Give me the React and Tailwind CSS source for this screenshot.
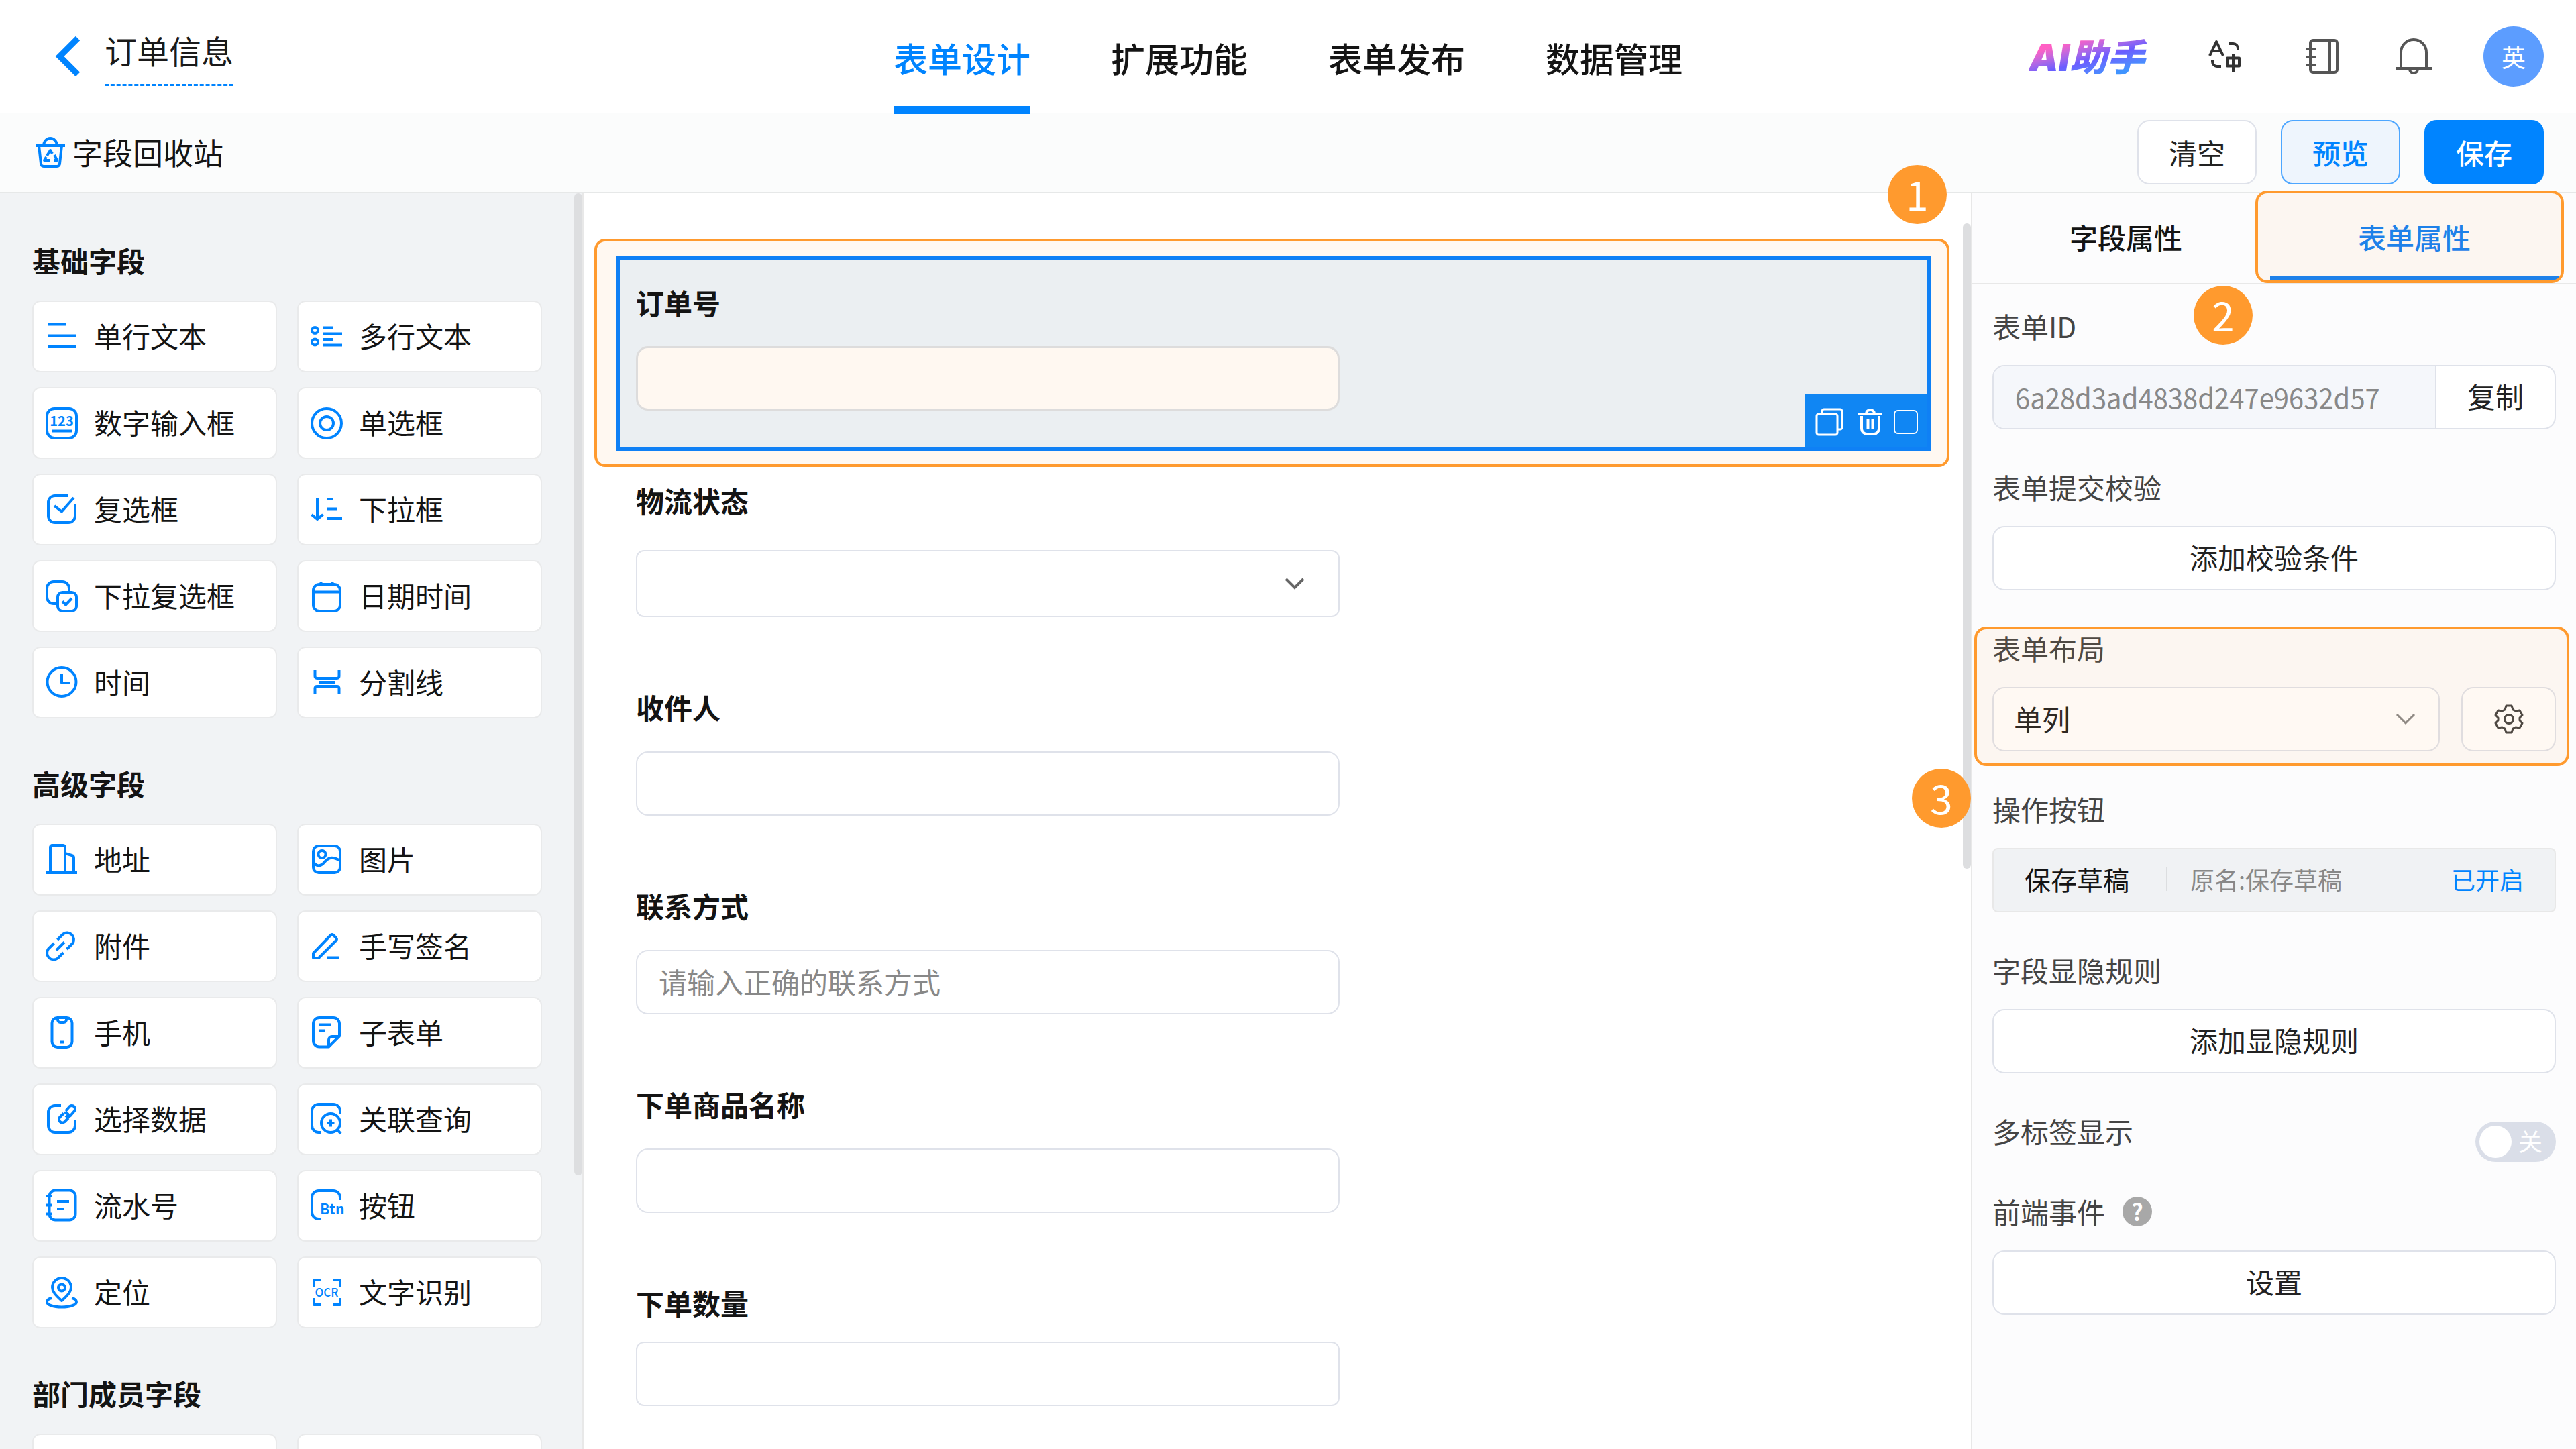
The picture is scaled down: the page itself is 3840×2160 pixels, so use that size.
import { useState } from "react";

const icons = {
  text: <path d="M3 5.5h27M3 22.5h42M3 39h42" />,
  textarea: (
    <>
      <circle cx="6.5" cy="14.5" r="4.5" />
      <circle cx="6.5" cy="32" r="4.5" />
      <path d="M19 10.5h15M19 19.5h28M19 28h15M19 36.5h28" />
    </>
  ),
  number: (
    <>
      <rect x="2" y="2" width="44" height="44" rx="11" />
      <path d="M9 35.5h30" />
      <text x="24" y="28" textAnchor="middle" fontSize="20" fontWeight="700" fill="currentColor" stroke="none">
        123
      </text>
    </>
  ),
  radio: (
    <>
      <circle cx="24" cy="24" r="22" />
      <circle cx="24" cy="24" r="10" />
    </>
  ),
  checkbox: (
    <>
      <path d="M34 3H14A10 10 0 0 0 4 13v20a10 10 0 0 0 10 10h20a10 10 0 0 0 10-10V15" />
      <path d="M13 18l11 8.5L42 6" />
    </>
  ),
  dropdown: <path d="M10 7v31M1.5 31l8.5 7 8.5-7M24 8h9M24 22.5h16M24 37h23" />,
  multiDropdown: (
    <>
      <path d="M17 35h-5A10 10 0 0 1 2 25V12A10 10 0 0 1 12 2h13a10 10 0 0 1 10 10v5" />
      <rect x="18" y="18" width="28" height="28" rx="7" />
      <path d="M25 31.5l5 5 9-9.5" />
    </>
  ),
  calendar: (
    <>
      <rect x="4" y="6" width="40" height="40" rx="9" />
      <path d="M4 17.5h40M15.5 2v7M32.5 2v7" />
    </>
  ),
  clock: (
    <>
      <circle cx="24" cy="22.5" r="21.5" />
      <path d="M24 11v13h13" />
    </>
  ),
  divider: (
    <path d="M6.5 5v9a3 3 0 0 0 3 3h30a3 3 0 0 0 3-3V5M12 23h24M6.5 41v-9a3 3 0 0 1 3-3h30a3 3 0 0 1 3 3v9" />
  ),
  address: <path d="M1 43h46M7 43V5a3 3 0 0 1 3-3h16a3 3 0 0 1 3 3v38M29 14l10 3a4 4 0 0 1 3 4v22" />,
  picture: (
    <>
      <rect x="4" y="3" width="40" height="40" rx="8" />
      <circle cx="17" cy="15.5" r="5.5" />
      <path d="M4 27c5 7 11 7 16 1s10-11 24-3" />
    </>
  ),
  attachment: (
    <path d="M17.5 14L26 5.5A10 10 0 0 1 40 19.5L31.5 28M26.5 33L18 41.5A10 10 0 0 1 4 27.5L12.5 19M16 29.5l12-12" />
  ),
  signature: <path d="M4 41v-7L30 7a3 3 0 0 1 4 0l4 4a3 3 0 0 1 0 4L12 41zM24 40.5h19" />,
  phone: (
    <>
      <rect x="9.5" y="1" width="30" height="44" rx="8" />
      <path d="M18 1v3a4 4 0 0 0 4 4h5a4 4 0 0 0 4-4V1M22 37.5h6" />
    </>
  ),
  subform: (
    <path d="M27 44.5H13A9 9 0 0 1 4 35.5V10A9 9 0 0 1 13 1h21a9 9 0 0 1 9 9v18.5L27 44.5V34a5 5 0 0 1 5-5h11M13 11.5h17M13 20.5h9" />
  ),
  pickData: (
    <>
      <path d="M23 3h-9A10 10 0 0 0 4 13v20a10 10 0 0 0 10 10h20a10 10 0 0 0 10-10v-8" />
      <path d="M27 14.5l-6 6a5 5 0 0 0 7 7l6-6M30 11l6-7a5 5 0 0 1 7 7l-6 7a5 5 0 0 1-7 0M34 21a5 5 0 0 0-6-7" />
    </>
  ),
  relation: (
    <>
      <path d="M44 15v-4A10 10 0 0 0 34 1H12A10 10 0 0 0 2 11v22a10 10 0 0 0 10 10h4" />
      <circle cx="30" cy="29" r="14" />
      <path d="M30 23.5v11M24.5 29h11M40 39l5 6" />
    </>
  ),
  serial: (
    <>
      <rect x="5.5" y="0.5" width="39" height="44" rx="9" />
      <path d="M1 9h8M1 22.5h8M1 35.5h8M17 17h18M17 28h10" />
    </>
  ),
  button: (
    <>
      <path d="M44 15v-4A10 10 0 0 0 34 1H12A10 10 0 0 0 2 11v22a10 10 0 0 0 10 10h4" />
      <text x="14" y="36" fontSize="21" fontWeight="700" fill="currentColor" stroke="none">
        Btn
      </text>
    </>
  ),
  location: (
    <>
      <path d="M24 36C14 27 10 22 10 16a14 14 0 0 1 28 0c0 6-4 11-14 20z" />
      <circle cx="24" cy="16.5" r="5" />
      <path d="M9 32c-4 1-7 3-7 6 0 4 9 7.5 22 7.5S46 42 46 38c0-3-3-5-7-6" />
    </>
  ),
  ocr: (
    <>
      <path d="M5 15V5h10M34 5h10v10M44 32v10H34M15 42H5V32" />
      <text x="24" y="30" textAnchor="middle" fontSize="17" fontWeight="500" fill="currentColor" stroke="none">
        OCR
      </text>
    </>
  ),
};

const fieldGroups = [
  {
    title: "基础字段",
    items: [
      ["text", "单行文本"],
      ["textarea", "多行文本"],
      ["number", "数字输入框"],
      ["radio", "单选框"],
      ["checkbox", "复选框"],
      ["dropdown", "下拉框"],
      ["multiDropdown", "下拉复选框"],
      ["calendar", "日期时间"],
      ["clock", "时间"],
      ["divider", "分割线"],
    ],
  },
  {
    title: "高级字段",
    items: [
      ["address", "地址"],
      ["picture", "图片"],
      ["attachment", "附件"],
      ["signature", "手写签名"],
      ["phone", "手机"],
      ["subform", "子表单"],
      ["pickData", "选择数据"],
      ["relation", "关联查询"],
      ["serial", "流水号"],
      ["button", "按钮"],
      ["location", "定位"],
      ["ocr", "文字识别"],
    ],
  },
  {
    title: "部门成员字段",
    items: [
      ["", ""],
      ["", ""],
    ],
  },
];

const navTabs = ["表单设计", "扩展功能", "表单发布", "数据管理"];

function StepBadge({ children, className }) {
  return (
    <span
      className={`absolute z-20 flex size-[88px] items-center justify-center rounded-full bg-[#ff9a2e] pb-1 text-[60px] leading-none text-white ${className}`}
    >
      {children}
    </span>
  );
}

function Header() {
  return (
    <header className="grid h-[168px] shrink-0 grid-cols-[1fr_auto_1fr] items-start bg-white px-12">
      <div className="flex items-start pt-[46px] pl-[34px]">
        <button type="button" aria-label="返回" className="mt-2 mr-[36px] text-[#0084ff]">
          <svg viewBox="0 0 38 60" className="h-[60px] w-[38px]" fill="none" stroke="currentColor" strokeWidth="9">
            <path d="M34 3L7 30l27 27" />
          </svg>
        </button>
        <h1 className="h-[82px] border-b-3 border-dashed border-[#0084ff] text-[48px] leading-[56px] text-[#1a1a1a]">
          订单信息
        </h1>
      </div>

      <nav className="flex gap-[120px]">
        {navTabs.map((tab, i) => (
          <a
            key={tab}
            href="#"
            className={`relative z-10 h-[170px] border-b-12 pt-14 text-[51px] leading-[60px] font-medium ${
              i === 0 ? "border-[#0084ff] text-[#0084ff]" : "border-transparent text-[#141414]"
            }`}
          >
            {tab}
          </a>
        ))}
      </nav>

      <div className="flex h-[168px] items-center justify-end">
        <a
          href="#"
          className="mr-[87px] bg-linear-165 from-[#ff5fc4] from-25% via-[#6a5cff] via-55% to-[#3f94ff] to-80% bg-clip-text pr-2 text-[56px] leading-[64px] font-black text-transparent italic"
        >
          <span className="font-['Inter',sans-serif]">AI</span>助手
        </a>
        <button type="button" aria-label="语言" className="mr-[96px] text-[#333]">
          <svg viewBox="0 0 48 50" className="h-[50px] w-[48px]" fill="none" stroke="currentColor" strokeWidth="4">
            <path
              d="M2 24L12 3l10 21M6 17h12M31 6h6a7 7 0 0 1 7 7v3M6 31v2a7 7 0 0 0 7 7h6M28 27.5h18v12H28zM37 22v27"
              strokeLinejoin="round"
            />
          </svg>
        </button>
        <button type="button" aria-label="帮助文档" className="mr-[84px] text-[#555]">
          <svg viewBox="0 0 50 54" className="h-[54px] w-[50px]" fill="none" stroke="currentColor" strokeWidth="4">
            <rect x="8" y="3" width="40" height="48" rx="4" />
            <path d="M37 3v48M2 16h14M2 28h14M2 40h14" />
          </svg>
        </button>
        <button type="button" aria-label="通知" className="mr-[76px] text-[#555]">
          <svg viewBox="0 0 56 56" className="size-[56px]" fill="none" stroke="currentColor" strokeWidth="4">
            <path d="M9 46V22a19 19 0 0 1 38 0v24M1 46h54M22 47a6 6 0 0 0 12 0" />
          </svg>
        </button>
        <span className="flex size-[90px] items-center justify-center rounded-full bg-[#5c9dff] text-[36px] text-white">
          英
        </span>
      </div>
    </header>
  );
}

function Toolbar() {
  return (
    <div className="flex h-[120px] shrink-0 items-center justify-between border-b-2 border-[#e6e8e8] bg-[#fbfcfc] px-12">
      <a href="#" className="flex items-center gap-[10px] pl-1 text-[45px] leading-[60px] text-[#141414]">
        <svg
          viewBox="0 0 46 46"
          className="size-[46px] text-[#0084ff]"
          fill="none"
          stroke="currentColor"
          strokeWidth="4"
          strokeLinejoin="round"
        >
          <path d="M1 13h44M6 13l3 27a4 4 0 0 0 4 4h20a4 4 0 0 0 4-4l3-27M13 13a10 11 0 0 1 20 0" />
          <path d="M18 28l5-8 3 5M29 27l4 8h-5M22 35h-8l3-5" />
        </svg>
        字段回收站
      </a>
      <div className="flex gap-9 text-[42px] leading-[60px]">
        <button type="button" className="h-24 w-[178px] rounded-[18px] border-2 border-[#dfe2ea] bg-white text-[#222]">
          清空
        </button>
        <button
          type="button"
          className="h-24 w-[178px] rounded-[18px] border-2 border-[#4da6ff] bg-[#eef5fd] font-medium text-[#0084ff]"
        >
          预览
        </button>
        <button type="button" className="h-24 w-[178px] rounded-[18px] bg-[#0084ff] font-medium text-white">
          保存
        </button>
      </div>
    </div>
  );
}

function FieldLibrary() {
  return (
    <aside className="relative w-[870px] shrink-0 overflow-hidden border-r-2 border-[#e8e8e8] bg-[#f1f3f5] pt-[72px] pr-[60px] pl-12">
      {fieldGroups.map((group) => (
        <section key={group.title} className="mb-[69px]">
          <h2 className="mb-8 text-[42px] leading-[56px] font-bold text-[#141414]">{group.title}</h2>
          <div className="grid grid-cols-2 gap-x-[30px] gap-y-[22px]">
            {group.items.map(([icon, name], i) => (
              <button
                key={name || i}
                type="button"
                className="flex h-[107px] items-center gap-6 rounded-xl border-2 border-[#e9eaeb] bg-white pl-[18px] text-[42px] leading-[60px] text-[#141414]"
              >
                {icon && (
                  <svg
                    viewBox="0 0 48 48"
                    className="size-12 shrink-0 overflow-visible text-[#0084ff]"
                    fill="none"
                    stroke="currentColor"
                    strokeWidth="4"
                    strokeLinejoin="round"
                  >
                    {icons[icon]}
                  </svg>
                )}
                <span className="pb-1">{name}</span>
              </button>
            ))}
          </div>
        </section>
      ))}
      <div className="absolute top-0 right-0 h-[1464px] w-3 rounded-full bg-[#dddee0]" />
    </aside>
  );
}

const inputClass =
  "block h-24 w-full max-w-[1049px] rounded-[18px] border-2 border-[#dfe2ea] bg-white px-8 pb-1 text-[42px] text-[#222] outline-none placeholder:text-[#888]";
const labelClass = "block text-[42px] leading-[56px] font-bold text-[#141414]";

function FormCanvas() {
  return (
    <main className="relative min-w-0 flex-1 bg-white pt-[68px] pr-[32px] pl-4">
      <div className="relative rounded-2xl border-4 border-[#ff9a2e] bg-[#fff8f1] pt-[22px] pr-6 pb-5 pl-7">
        <div className="relative h-[290px] border-6 border-[#0f80f5] bg-[#ebeff2] px-6 pt-[35px]">
          <label htmlFor="orderNo" className={labelClass}>
            订单号
          </label>
          <input
            id="orderNo"
            className="mt-[37px] block h-24 w-full max-w-[1049px] rounded-[18px] border-3 border-[#dddcdc] bg-[#fff8f1] px-8 text-[42px] outline-none"
          />
          <div className="absolute right-0 bottom-0 flex h-[78px] w-[182px] items-center bg-[#1086f3] pt-1 pl-4 text-white">
            <button type="button" aria-label="复制字段" className="mr-[22px]">
              <svg viewBox="0 0 42 42" className="size-[42px]" fill="none" stroke="currentColor" strokeWidth="3">
                <rect x="2" y="9" width="31" height="31" rx="3" />
                <path d="M10 9V5a3 3 0 0 1 3-3h24a3 3 0 0 1 3 3v24a3 3 0 0 1-3 3h-4" />
              </svg>
            </button>
            <button type="button" aria-label="删除字段" className="mr-[17px]">
              <svg viewBox="0 0 36 42" className="h-[42px] w-9" fill="none" stroke="currentColor" strokeWidth="4">
                <path d="M0 9h36M5 12v19a8 8 0 0 0 8 8h10a8 8 0 0 0 8-8V12M14.5 17v14M21.5 17v14M12 8a6 5 0 0 1 12 0" />
              </svg>
            </button>
            <input
              type="checkbox"
              aria-label="选择字段"
              className="size-9 appearance-none rounded-[6px] border-2 border-white"
            />
          </div>
        </div>
        <StepBadge className="-top-[114px] right-0">1</StepBadge>
      </div>

      <div className="flex flex-col gap-[106px] pt-[22px] pl-[62px]">
        <div>
          <label htmlFor="status" className={labelClass}>
            物流状态
          </label>
          <div className="relative mt-[46px] max-w-[1049px]">
            <select
              id="status"
              className="block h-25 w-full appearance-none rounded-xl border-2 border-[#dfe2ea] bg-white px-8 text-[42px] outline-none"
            />
            <Chevron className="right-[52px] text-[#666]" strokeWidth="4" />
          </div>
        </div>
        <div>
          <label htmlFor="receiver" className={labelClass}>
            收件人
          </label>
          <input id="receiver" className={`mt-[38px] ${inputClass}`} />
        </div>
        <div>
          <label htmlFor="contact" className={labelClass}>
            联系方式
          </label>
          <input id="contact" placeholder="请输入正确的联系方式" className={`mt-[38px] ${inputClass}`} />
        </div>
        <div>
          <label htmlFor="product" className={labelClass}>
            下单商品名称
          </label>
          <input id="product" className={`mt-[38px] ${inputClass}`} />
        </div>
        <div>
          <label htmlFor="amount" className={labelClass}>
            下单数量
          </label>
          <input
            id="amount"
            className="mt-[30px] block h-24 w-full max-w-[1049px] rounded-xl border-2 border-[#dfe2ea] bg-white px-8 text-[42px] outline-none"
          />
        </div>
      </div>

      <div className="absolute top-[45px] right-0 h-[962px] w-3 rounded-full bg-[#dddee0]" />
    </main>
  );
}

function Chevron({ className, strokeWidth }) {
  return (
    <svg
      viewBox="0 0 30 18"
      className={`pointer-events-none absolute top-1/2 h-[18px] w-[30px] -translate-y-1/2 ${className}`}
      fill="none"
      stroke="currentColor"
      strokeWidth={strokeWidth}
    >
      <path d="M2 2l13 13L28 2" />
    </svg>
  );
}

const panelLabel = "block text-[42px] leading-[56px] text-[#444]";
const panelButton =
  "mt-[30px] h-24 w-full rounded-[18px] border-2 border-[#dfe2ea] bg-white pb-1 text-[42px] leading-[60px] text-[#222]";

function PropertyPanel() {
  const [multiTab, setMultiTab] = useState(false);

  return (
    <aside className="relative w-[902px] shrink-0 border-l-2 border-[#e8e8e8] bg-[#fcfcfd]">
      <div className="flex h-[136px] border-b-2 border-[#e8e8e8] pr-[26px] pl-[14px] text-[42px] leading-[60px] font-medium">
        <button type="button" className="flex-1 pb-1 text-[#141414]">
          字段属性
        </button>
        <button type="button" className="relative flex-1 pb-1 text-[#1080f5]">
          表单属性
          <span className="absolute inset-x-0 bottom-1 h-[6px] bg-[#1080f5]" />
          <span className="absolute -top-1 -right-2 bottom-0 -left-[22px] rounded-[18px] border-4 border-[#ff9a2e] bg-[#ff9a2e]/6" />
        </button>
      </div>
      <StepBadge className="top-[138px] left-[330px]">2</StepBadge>

      <div className="flex flex-col gap-[58px] px-[30px] pt-[34px]">
        <div>
          <label htmlFor="formId" className={panelLabel}>
            表单ID
          </label>
          <div className="mt-[30px] flex h-24 overflow-hidden rounded-[18px] border-2 border-[#dfe2ea] bg-white">
            <input
              id="formId"
              readOnly
              defaultValue="6a28d3ad4838d247e9632d57"
              className="min-w-0 flex-1 border-r-2 border-[#dfe2ea] bg-[#f5f7fb] pl-8 text-[40px] text-[#888] outline-none"
            />
            <button type="button" className="w-[176px] pb-1 text-[42px] leading-[60px] text-[#222]">
              复制
            </button>
          </div>
        </div>

        <div>
          <span className={panelLabel}>表单提交校验</span>
          <button type="button" className={panelButton}>
            添加校验条件
          </button>
        </div>

        <div className="relative">
          <label htmlFor="layout" className={panelLabel}>
            表单布局
          </label>
          <div className="mt-[30px] flex gap-8">
            <div className="relative flex-1">
              <select
                id="layout"
                className="block h-24 w-full appearance-none rounded-[18px] border-2 border-[#dfe2ea] bg-white px-[30px] pb-1 text-[42px] text-[#222] outline-none"
              >
                <option>单列</option>
              </select>
              <Chevron className="right-[36px] text-[#888]" strokeWidth="3" />
            </div>
            <button
              type="button"
              aria-label="布局设置"
              className="flex h-24 w-[141px] items-center justify-center rounded-[18px] border-2 border-[#dfe2ea] bg-white text-[#444]"
            >
              <svg viewBox="0 0 44 44" className="size-11" fill="none" stroke="currentColor" strokeWidth="3" strokeLinejoin="round">
                <path d="M18 2h8l2 6 4 2 6-1 4 7-4 4v4l4 4-4 7-6-1-4 2-2 6h-8l-2-6-4-2-6 1-4-7 4-4v-4l-4-4 4-7 6 1 4-2z" />
                <circle cx="22" cy="22" r="6.5" />
              </svg>
            </button>
          </div>
          <span className="pointer-events-none absolute -top-1 -right-5 -bottom-[22px] -left-[27px] rounded-[18px] border-4 border-[#ff9a2e] bg-[#ff9a2e]/6" />
        </div>

        <div>
          <span className={panelLabel}>操作按钮</span>
          <div className="mt-[30px] flex h-24 items-center rounded-lg border-2 border-[#e8e8e8] bg-[#f0f2f4] px-[46px] pb-1 text-[36px]">
            <span className="text-[39px] text-[#141414]">保存草稿</span>
            <span className="mr-[34px] ml-[55px] h-9 w-[2px] bg-[#dcdee0]" />
            <span className="text-[#888]">原名:保存草稿</span>
            <a href="#" className="ml-auto text-[#0084ff]">
              已开启
            </a>
          </div>
        </div>

        <div>
          <span className={panelLabel}>字段显隐规则</span>
          <button type="button" className={panelButton}>
            添加显隐规则
          </button>
        </div>

        <div>
          <label className="mb-[46px] flex h-[74px] justify-between">
            <span className={panelLabel}>多标签显示</span>
            <span className="relative flex h-[60px] w-[120px] items-center justify-end self-end rounded-full bg-[#dadee8] pr-5 pb-1 text-[36px] leading-none text-white">
              <input
                type="checkbox"
                checked={multiTab}
                onChange={(e) => setMultiTab(e.target.checked)}
                className="absolute top-[6px] left-[6px] size-12 appearance-none rounded-full bg-white"
              />
              关
            </span>
          </label>
          <div className="flex items-center gap-[26px]">
            <span className={panelLabel}>前端事件</span>
            <button
              type="button"
              aria-label="前端事件说明"
              className="flex size-11 items-center justify-center rounded-full bg-[#a8a8a8] text-[34px] leading-none font-bold text-white"
            >
              ?
            </button>
          </div>
          <button type="button" className={panelButton}>
            设置
          </button>
        </div>
      </div>
      <StepBadge className="top-[858px] -left-[90px]">3</StepBadge>
    </aside>
  );
}

export default function App() {
  return (
    <div className="flex h-screen flex-col overflow-hidden bg-white font-['Noto_Sans_CJK_SC',sans-serif]">
      <Header />
      <Toolbar />
      <div className="flex min-h-0 flex-1">
        <FieldLibrary />
        <FormCanvas />
        <PropertyPanel />
      </div>
    </div>
  );
}
